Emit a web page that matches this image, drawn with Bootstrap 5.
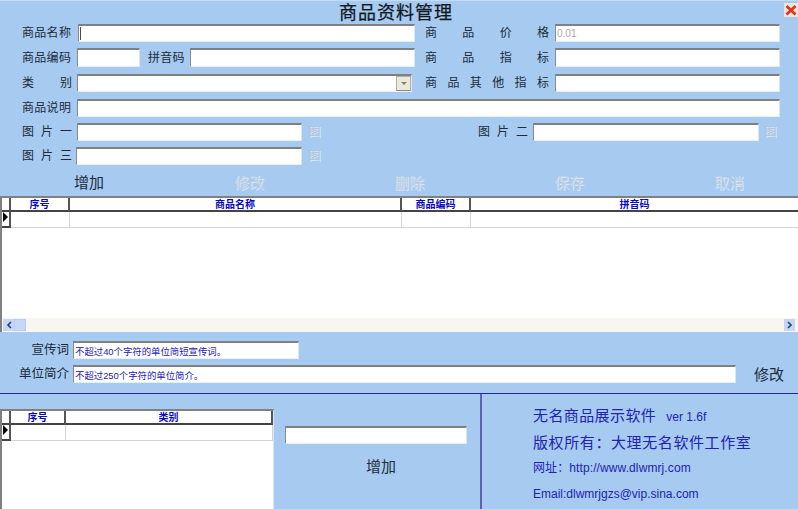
<!DOCTYPE html>
<html lang="zh-CN">
<head>
<meta charset="utf-8">
<title>商品资料管理</title>
<link href="https://cdn.jsdelivr.net/npm/bootstrap@5.3.0/dist/css/bootstrap.min.css" rel="stylesheet">
<style>
html,body{margin:0;height:100%;overflow:hidden;background:#a6caf0}
body{font-family:"Liberation Sans","Noto Sans CJK SC",sans-serif;color:#1d2b3a}
.app-win{width:798px;height:509px;background:#a6caf0;position:relative;overflow:hidden;border-top:1px solid #c6dcf4}
.win-title{height:23px;font-size:18px;line-height:24px;letter-spacing:1px;font-weight:400;color:#10181f;text-align:center;margin:0;padding-right:6px;-webkit-text-stroke:.25px #10181f}
.win-close{position:absolute;top:2px;right:0;width:14px;height:14px;background:#e9e6dc;border:0;padding:0;line-height:0}
.form-rows{display:grid;grid-template-rows:24px 26px 25px 24px 24px 23px;padding-left:22px;align-items:start}
.frow{display:flex;align-items:center;height:18px}
.frow.tall{height:19px}
.lbl{font-size:12px;letter-spacing:.3px;white-space:nowrap;flex:none;line-height:18px;margin:0}
.lbl-j{text-align:justify;text-align-last:justify;text-justify:inter-character;letter-spacing:0}
.w-a{width:50px}
.w-b{width:124px}
.form-control.fld,.fld{height:18px;min-height:0;flex:none;padding:0 0 0 1px;font-size:9.4px;line-height:14px;background-color:#fff;border-style:solid;border-width:2px 1px 1px 1px;border-color:#808080 #d8e6f6 #e6f0fa #8a8a8a;border-radius:0;box-shadow:none;color:#2020b8}
.frow.tall .fld{height:19px}
.is-focused{background-image:linear-gradient(#4a4a4a,#4a4a4a);background-repeat:no-repeat;background-size:1px 13px;background-position:1px center}
.form-control.fld.is-muted{color:#a9a9a9;font-size:10px}
.pic-btn{flex:none;border:0;background:none;padding:0;font-size:12px;line-height:14px;color:#b4c4d6;text-shadow:1px 1px 0 #dbe8f6;width:13px}
.combo{display:flex;padding:0}
.combo-input{flex:1;border:0;background:#fff;padding:0;appearance:none;min-width:0;border-radius:0}
.combo-arrow{flex:none;width:15px;height:15px;background:#ece9d8;border:1px solid #b5b09c;border-bottom-color:#8f8b7a;display:flex;align-items:center;justify-content:center}
.combo-arrow i{display:block;border:3px solid transparent;border-top-color:#7f7f7f;border-bottom:0}
.cmd-row{height:26px;display:flex;padding-left:74px;gap:130px;align-items:center}
.cmd{border:0;background:none;padding:0;width:30px;font-size:15px;line-height:20px;white-space:nowrap;color:#1d2b3a}
.cmd:disabled{color:#bfd0e2;text-shadow:1px 1px 0 #d8e6f6;opacity:1}
.grid-box{background:#fff;border-top:2px solid #808080;border-left:2px solid #808080;display:flex;flex-direction:column;overflow:hidden}
.grid-top{height:136px}
.grid-low{height:101px;width:274px;border-right:1px solid #d7e5f5}
.grid-fill{flex:1}
.data-tbl{table-layout:fixed;border-collapse:separate;border-spacing:0;margin:0;width:100%}
.data-tbl th,.data-tbl td{padding:0;border-right:1px solid #d4d4d4;border-bottom:1px solid #d4d4d4;background:#fff;box-shadow:none}
.data-tbl th{height:14px;padding-top:1px;font-size:10px;line-height:11px;font-weight:700;color:#0808c0;text-align:center;border-right:2px solid #555;border-bottom:2px solid #444}
.data-tbl td{height:16px}
.data-tbl td.ind,.data-tbl th.ind{border-right:2px solid #555;border-bottom:2px solid #444}
.grid-top th:last-child,.grid-top td:last-child{border-right:0}
.row-arrow{display:block;border:solid transparent;border-width:5px 0 5px 5px;border-left-color:#000;margin-left:1px}
.hscroll{height:14px;background:#f7f6f1;display:flex;justify-content:space-between;align-items:center;padding:0 3px 0 1px;flex:none}
.hscroll-l{display:flex}
.sb-btn{width:11px;height:12px;background:#c8d6f0;display:flex;align-items:center;justify-content:center;border:0;padding:0}
.sb-thumb{width:12px;height:12px;background:#c6d8f4;border:1px solid #b8cbea}
.promo{height:61px;padding-top:9px;display:grid;grid-template-rows:24px 18px;align-items:start}
.promo-row{display:flex;align-items:center;height:18px}
.promo-lbl{width:69px;text-align:right;font-size:12.5px;margin:0 4px 0 0;flex:none;line-height:18px}
.w-c{width:226px}
.w-d{width:663px}
.promo-btn{margin-left:18px;margin-top:2px}
.lower{flex:1;display:flex;border-top:1px solid #26268e;min-height:0}
.lower-l{width:480px;flex:none;padding-top:15px;display:flex}
.lower-mid{margin-left:11px;padding-top:17px;width:182px;display:flex;flex-direction:column;align-items:center}
.lower-mid .cmd{margin:13px 0 0 10px}
.about{border-left:2px solid #5c62b4;flex:1;padding:12px 0 0 51px;color:#2222b2}
.about p{margin:0;white-space:nowrap}
.a1{font-size:15px;letter-spacing:.6px;line-height:20px;height:27px}
.a1 small{font-size:12px;letter-spacing:0;margin-left:10px}
.a1:first-child{letter-spacing:.4px}
.a2{font-size:12px;letter-spacing:.1px;line-height:16px;height:25px}
.a2+.a2{padding-top:1px;letter-spacing:0}
</style>
</head>
<body>
<div class="app-win d-flex flex-column">
  <h1 class="win-title">商品资料管理</h1>
  <button class="win-close" type="button" aria-label="关闭"><svg width="14" height="14" viewBox="0 0 14 14"><path d="M2.5 3l9 8.500M11.500 3l-9 8.500" stroke="#e0341c" stroke-width="2.800"/></svg></button>

  <form class="form-rows">
    <div class="frow">
      <label class="lbl w-a">商品名称</label>
      <input class="form-control fld is-focused" style="width:337px;margin-left:6px">
      <label class="lbl lbl-j w-b" style="margin-left:10px">商品价格</label>
      <input class="form-control fld is-muted" style="width:225px;margin-left:6px" value="0.01">
    </div>
    <div class="frow tall">
      <label class="lbl w-a">商品编码</label>
      <input class="form-control fld" style="width:63px;margin-left:5px">
      <label class="lbl" style="margin-left:8px;width:37px">拼音码</label>
      <input class="form-control fld" style="width:225px;margin-left:5px">
      <label class="lbl lbl-j w-b" style="margin-left:10px">商品指标</label>
      <input class="form-control fld" style="width:225px;margin-left:6px">
    </div>
    <div class="frow">
      <label class="lbl lbl-j w-a">类别</label>
      <div class="fld combo" style="width:335px;margin-left:5px">
        <select class="combo-input" aria-label="类别"></select>
        <span class="combo-arrow"><i></i></span>
      </div>
      <label class="lbl lbl-j w-b" style="margin-left:13px">商品其他指标</label>
      <input class="form-control fld" style="width:225px;margin-left:6px">
    </div>
    <div class="frow">
      <label class="lbl w-a">商品说明</label>
      <input class="form-control fld" style="width:703px;margin-left:5px">
    </div>
    <div class="frow">
      <label class="lbl lbl-j w-a">图片一</label>
      <input class="form-control fld" style="width:225px;margin-left:5px">
      <button class="pic-btn" type="button" disabled style="margin-left:6px">图</button>
      <label class="lbl lbl-j w-a" style="margin-left:157px">图片二</label>
      <input class="form-control fld" style="width:226px;margin-left:5px">
      <button class="pic-btn" type="button" disabled style="margin-left:5px">图</button>
    </div>
    <div class="frow">
      <label class="lbl lbl-j w-a">图片三</label>
      <input class="form-control fld" style="width:226px;margin-left:4px">
      <button class="pic-btn" type="button" disabled style="margin-left:6px">图</button>
    </div>
  </form>

  <div class="cmd-row">
    <button class="cmd" type="button">增加</button>
    <button class="cmd" type="button" disabled>修改</button>
    <button class="cmd" type="button" disabled>删除</button>
    <button class="cmd" type="button" disabled>保存</button>
    <button class="cmd" type="button" disabled>取消</button>
  </div>

  <div class="grid-box grid-top">
    <table class="table data-tbl">
      <colgroup><col style="width:9px"><col style="width:59px"><col style="width:332px"><col style="width:69px"><col></colgroup>
      <thead><tr><th class="ind"></th><th>序号</th><th>商品名称</th><th>商品编码</th><th>拼音码</th></tr></thead>
      <tbody><tr><td class="ind"><span class="row-arrow"></span></td><td></td><td></td><td></td><td></td></tr></tbody>
    </table>
    <div class="grid-fill"></div>
    <div class="hscroll">
      <div class="hscroll-l">
        <span class="sb-btn"><svg width="6" height="8" viewBox="0 0 6 8"><path d="M5 1L2 4l3 3" fill="none" stroke="#1f3f8f" stroke-width="1.6"/></svg></span>
        <span class="sb-thumb"></span>
      </div>
      <span class="sb-btn"><svg width="6" height="8" viewBox="0 0 6 8"><path d="M1 1l3 3-3 3" fill="none" stroke="#1f3f8f" stroke-width="1.6"/></svg></span>
    </div>
  </div>

  <div class="promo">
    <div class="promo-row">
      <label class="promo-lbl">宣传词</label>
      <input class="form-control fld w-c" value="不超过40个字符的单位简短宣传词。">
    </div>
    <div class="promo-row">
      <label class="promo-lbl">单位简介</label>
      <input class="form-control fld w-d" value="不超过250个字符的单位简介。">
      <button class="cmd promo-btn" type="button">修改</button>
    </div>
  </div>

  <div class="lower">
    <div class="lower-l">
      <div class="grid-box grid-low">
        <table class="table data-tbl">
          <colgroup><col style="width:9px"><col style="width:55px"><col></colgroup>
          <thead><tr><th class="ind"></th><th>序号</th><th>类别</th></tr></thead>
          <tbody><tr><td class="ind"><span class="row-arrow"></span></td><td></td><td></td></tr></tbody>
        </table>
      </div>
      <div class="lower-mid">
        <input class="form-control fld w-100">
        <button class="cmd" type="button">增加</button>
      </div>
    </div>
    <div class="about">
      <p class="a1">无名商品展示软件<small>ver 1.6f</small></p>
      <p class="a1">版权所有：大理无名软件工作室</p>
      <p class="a2">网址：http://www.dlwmrj.com</p>
      <p class="a2">Email:dlwmrjgzs@vip.sina.com</p>
    </div>
  </div>
</div>
</body>
</html>
